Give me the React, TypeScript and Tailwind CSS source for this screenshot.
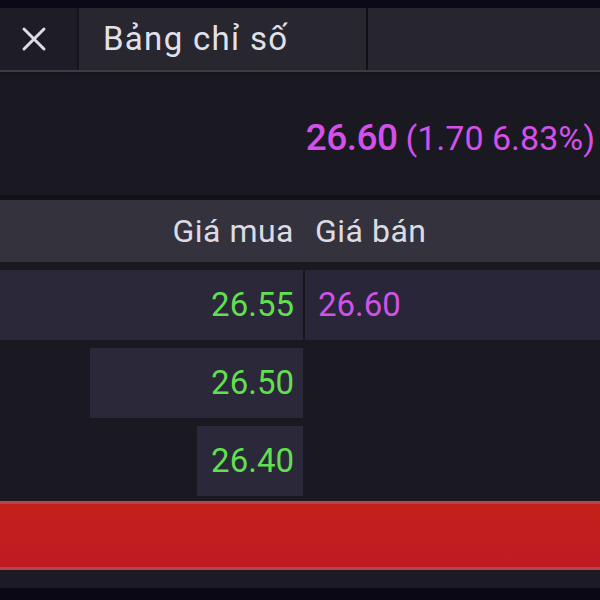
type Level = { bid: string; ask?: string; depth: number };

const LEVELS: Level[] = [
  { bid: '26.55', ask: '26.60', depth: 303 },
  { bid: '26.50', depth: 213 },
  { bid: '26.40', depth: 106 },
];

const font = { fontFamily: 'Roboto, "Noto Sans", sans-serif' };

function CloseIcon() {
  return (
    <svg width="26" height="26" viewBox="0 0 26 26" className="-ml-[10px]" aria-hidden="true">
      <path d="M3 3 L23 23 M23 3 L3 23" stroke="#dedde6" strokeWidth="3" strokeLinecap="round" fill="none" />
    </svg>
  );
}

function DepthRow({ level, first }: { level: Level; first: boolean }) {
  return (
    <div className={`grid h-[70px] grid-cols-[303px_1fr] ${first ? 'bg-[#282638]' : 'bg-[#1a1921]'}`}>
      <div className="flex justify-end">
        <div
          className="flex h-full items-center justify-end bg-[#2b2939] pr-[9px] text-[33px] text-[#62df50]"
          style={{ width: level.depth }}
        >
          {level.bid}
        </div>
      </div>
      <div className={`flex items-center pl-[13px] text-[33px] text-[#d052e6] ${first ? 'border-l-2 border-[#17161d]' : ''}`}>
        {level.ask}
      </div>
    </div>
  );
}

export default function App() {
  return (
    <div className="flex h-[600px] w-[600px] flex-col overflow-hidden bg-[#1a1921]" style={font}>
      {/* Window edge */}
      <div className="h-[8px] bg-[#0b0918]" />

      {/* Tab bar */}
      <div className="flex h-[62px] bg-[#27252e]">
        <div className="flex w-[79px] items-center justify-center border-r-2 border-[#15141b] bg-[#1e1c26]">
          <CloseIcon />
        </div>
        <div className="flex w-[289px] items-center border-r-2 border-[#111016] bg-[#28262f] pl-[24px] text-[33px] tracking-[1.3px] text-[#e2e1ea]">
          Bảng chỉ số
        </div>
        <div className="flex-1" />
      </div>
      <div className="h-[2px] bg-[#3d3b45]" />
      <div className="h-[3px] bg-[#16151c]" />

      {/* Last price */}
      <div className="flex h-[120px] items-center justify-end gap-[8px] pr-[5px] pt-[6px] text-[#d350ea]">
        <span className="text-[37px] font-medium tracking-[-0.5px]">26.60</span>
        <span className="text-[34px]">(1.70 6.83%)</span>
      </div>

      <div className="h-[5px] bg-[#121118]" />

      {/* Column headers */}
      <div className="grid h-[62px] grid-cols-[303px_1fr] bg-[#34323c] text-[32px] tracking-[0.5px] text-[#dcdbe4]">
        <div className="flex items-center justify-end pr-[9px]">Giá mua</div>
        <div className="flex items-center pl-[12px]">Giá bán</div>
      </div>

      <div className="flex flex-col gap-[8px] pt-[8px]">
        {LEVELS.map((level, i) => (
          <DepthRow key={level.bid} level={level} first={i === 0} />
        ))}
      </div>

      {/* Action bar */}
      <div className="mt-[5px] h-[3px] bg-[#b8434b]" />
      <div className="h-[63px] bg-gradient-to-b from-[#c4201a] to-[#c01a24]" />
      <div className="h-[3px] bg-[#b8434b]" />
      <div className="h-[18px] bg-[#1c1b25]" />
      <div className="flex-1 bg-[#0a0814]" />
    </div>
  );
}
